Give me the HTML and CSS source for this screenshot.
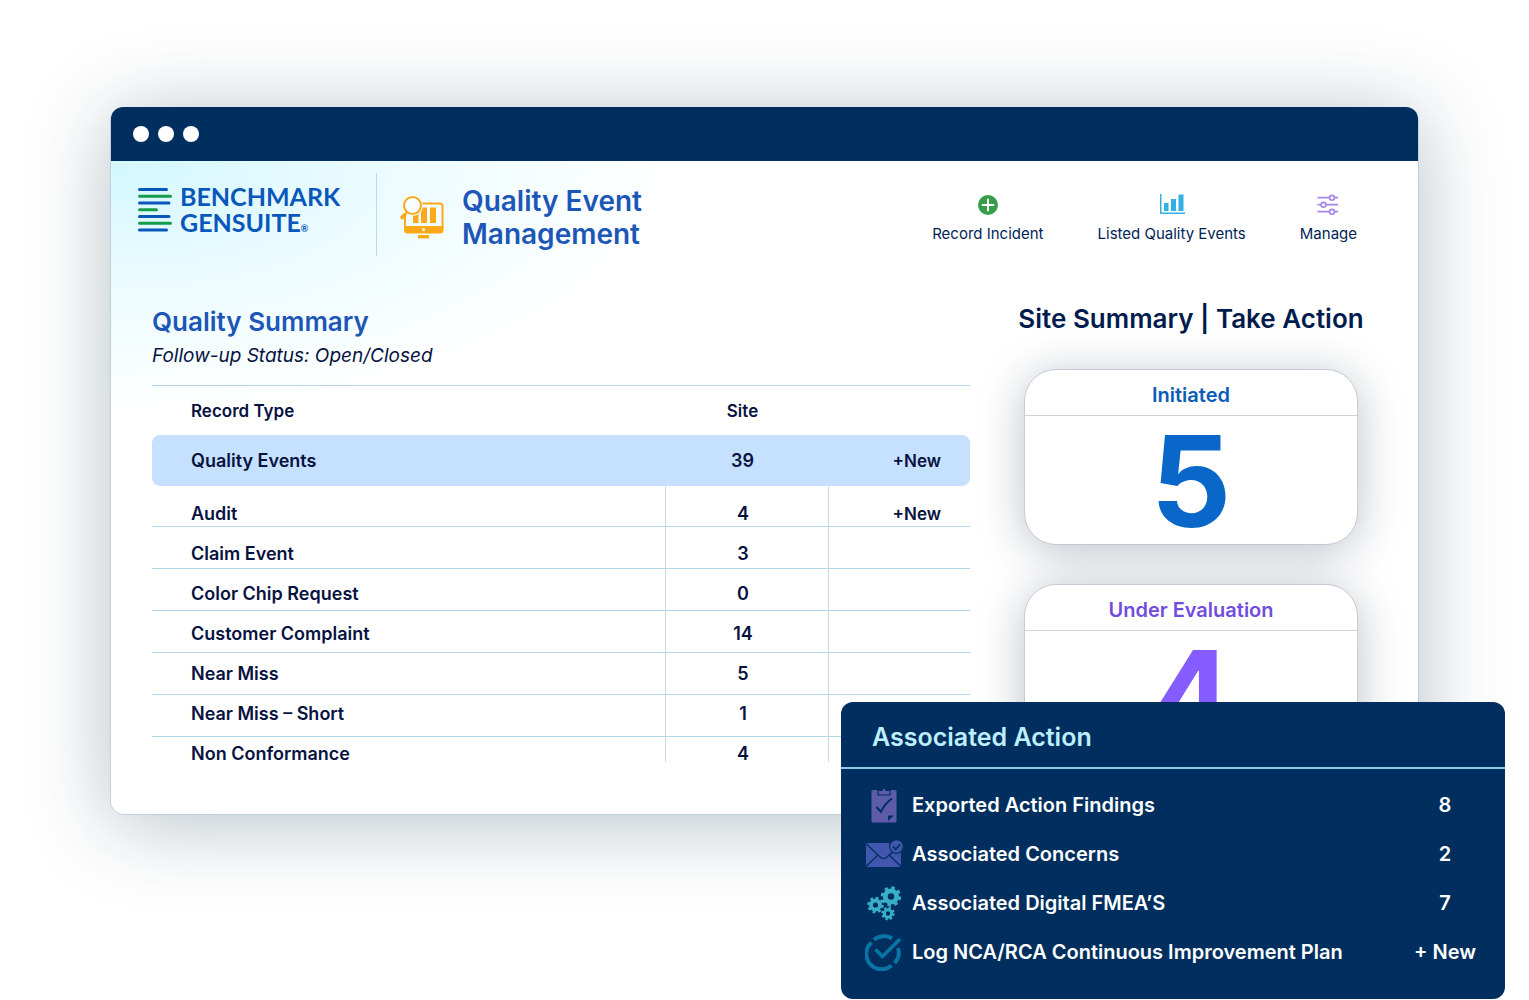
FILE: index.html
```html
<!DOCTYPE html>
<html lang="en">
<head>
<meta charset="utf-8">
<meta name="viewport" content="width=device-width, initial-scale=1">
<title>Quality Event Management</title>
<link rel="stylesheet" href="styles.css">
</head>
<body>
<main class="stage">
  <div class="window">
    <div class="titlebar"><span class="dot"></span><span class="dot"></span><span class="dot"></span></div>
    <header class="header">
      <a class="brand" href="#" aria-label="Benchmark Gensuite">
        <svg class="brand-mark" viewBox="0 0 34 46" fill="none" stroke-width="3" stroke-linecap="round">
          <path stroke="#0a57bb" d="M1.5 2.5h27M1.5 16h29.500M1.5 29.500h29.500M1.5 43h27"/>
          <path stroke="#159b4b" d="M1.500 9.200h31M1.500 22.700h17M1.500 36.200h31"/>
        </svg>
        <span class="brand-name">BENCHMARK<br>GENSUITE<small>®</small></span>
      </a>
      <div class="product">
        <svg class="product-icon" viewBox="0 0 44 44">
          <path fill="none" stroke="#fba919" stroke-width="2" d="M22 8.500h17.500a3 3 0 0 1 3 3v21M5 21v12"/>
          <path fill="#fba919" d="M4 31h39.500v4a3.500 3.500 0 0 1-3.500 3.500H7.500A3.500 3.500 0 0 1 4 35zM18 40h11v3.500H18zM13 20.500l5.500-2v9.500H13zM21 12.500h6V28h-6zM30 12.500h6V28h-6z"/>
          <circle cx="23.500" cy="34.500" r="1.500" fill="#fff"/>
          <circle cx="12.500" cy="10.500" r="10.500" fill="#f2fdff"/>
          <circle cx="12.500" cy="10.500" r="8.500" fill="#f7feff" stroke="#fba919" stroke-width="2"/>
          <path stroke="#fba919" stroke-width="2" d="M7 17l-2.500 3"/>
          <path stroke="#fba919" stroke-width="4" stroke-linecap="round" d="M4.300 20.300l-2 2"/>
        </svg>
        <h1 class="product-title">Quality Event<br>Management</h1>
      </div>
      <nav class="nav">
        <a class="nav-link" href="#">
          <svg viewBox="0 0 26 22"><circle cx="13" cy="11" r="10" fill="#369e49"/><path stroke="#fff" stroke-width="2" stroke-linecap="round" d="M13 5.500v11M7.500 11h11"/></svg>
          Record Incident
        </a>
        <a class="nav-link" href="#">
          <svg viewBox="0 0 26 22" fill="#32b0e5"><path d="M1 0h1.500v18.500H26V20H1zM5 9h4.500v8H5zM12 5h5v12h-5zM19.500 0.500h5V17h-5z"/></svg>
          Listed Quality Events
        </a>
        <a class="nav-link" href="#">
          <svg viewBox="0 0 26 22" fill="none" stroke="#a788ea" stroke-width="1.700"><path d="M2.500 3.700h12M19.500 3.700h3.500M2.500 10.700h3.500M11 10.700h12M2.500 17.700h12M19.500 17.700h3.500"/><circle cx="17" cy="3.700" r="2.400"/><circle cx="8.500" cy="10.700" r="2.400"/><circle cx="17" cy="17.700" r="2.400"/></svg>
          Manage
        </a>
      </nav>
    </header>
    <div class="content">
      <section class="summary">
        <h2 class="summary-title">Quality Summary</h2>
        <p class="summary-status">Follow-up Status: Open/Closed</p>
        <table class="records">
          <colgroup><col><col class="col-site"><col class="col-new"></colgroup>
          <thead><tr><th scope="col">Record Type</th><th scope="col">Site</th><th></th></tr></thead>
          <tbody class="selected"><tr><td>Quality Events</td><td>39</td><td><button type="button" class="new">+New</button></td></tr></tbody>
          <tbody class="ruled">
            <tr><td>Audit</td><td>4</td><td><button type="button" class="new">+New</button></td></tr>
            <tr><td>Claim Event</td><td>3</td><td></td></tr>
            <tr><td>Color Chip Request</td><td>0</td><td></td></tr>
            <tr><td>Customer Complaint</td><td>14</td><td></td></tr>
            <tr><td>Near Miss</td><td>5</td><td></td></tr>
            <tr><td>Near Miss – Short</td><td>1</td><td></td></tr>
            <tr><td>Non Conformance</td><td>4</td><td></td></tr>
          </tbody>
        </table>
      </section>
      <section class="site">
        <h2 class="site-title">Site Summary | Take Action</h2>
        <article class="card initiated"><h3 class="card-title">Initiated</h3><p class="card-count">5</p></article>
        <article class="card evaluation"><h3 class="card-title">Under Evaluation</h3><p class="card-count">4</p></article>
      </section>
    </div>
  </div>
  <aside class="panel">
    <h2 class="panel-title">Associated Action</h2>
    <ul class="actions">
      <li class="action">
        <svg viewBox="0 0 38 38"><path fill="#5d5caa" d="M8 4h22a1.500 1.500 0 0 1 1.500 1.500V35a1.500 1.500 0 0 1-1.500 1.500H8A1.500 1.500 0 0 1 6.500 35V5.500A1.500 1.500 0 0 1 8 4z"/><path fill="#5d5caa" stroke="#002f5f" stroke-width="1.200" d="M13 4.500h4a2 2 0 0 1 4 0h4V9H13z"/><path fill="none" stroke="#002f5f" stroke-width="2" d="M11.500 21l4.500 5c2-5 6-10 11-13.500"/><path fill="#002f5f" d="M23 29.500h6l-6 5.500z"/></svg>
        <span class="action-name">Exported Action Findings</span><span class="action-value">8</span>
      </li>
      <li class="action">
        <svg viewBox="0 0 38 38"><path fill="#4156ae" d="M2 8h34v22a2 2 0 0 1-2 2H3a2 2 0 0 1-2-2V9z"/><path fill="none" stroke="#002f5f" stroke-width="1.300" d="M1.500 9l13 12.500c3 3 5 3 8 0L35 11M1.500 31L13 20M35.500 31L24 20"/><circle cx="31.500" cy="11.500" r="7.500" fill="#002f5f"/><circle cx="31.500" cy="11.500" r="6.300" fill="#4156ae"/><path fill="none" stroke="#002f5f" stroke-width="1.700" d="M28 11.500l2.700 2.700 4.500-5"/></svg>
        <span class="action-name">Associated Concerns</span><span class="action-value">2</span>
      </li>
      <li class="action">
        <svg viewBox="0 0 38 38" fill="none" stroke="#38afc9">
          <circle cx="26" cy="12.500" r="5.700" stroke-width="4.800"/><circle cx="26" cy="12.500" r="8.700" stroke-width="3" stroke-dasharray="3.416"/>
          <circle cx="10.500" cy="21" r="4.500" stroke-width="3.800"/><circle cx="10.500" cy="21" r="7" stroke-width="2.600" stroke-dasharray="2.749"/>
          <circle cx="23" cy="29.500" r="3.700" stroke-width="3"/><circle cx="23" cy="29.500" r="5.700" stroke-width="2.200" stroke-dasharray="2.238"/>
        </svg>
        <span class="action-name">Associated Digital FMEA’S</span><span class="action-value">7</span>
      </li>
      <li class="action">
        <svg viewBox="0 0 38 38" fill="none" stroke="#0875a5"><path stroke-width="4" d="M6.500 9.500a15 15 0 0 0 20 23M9 6.800a15 15 0 0 1 18-1.300M33 15a15 15 0 0 1-3.500 15"/><path stroke-width="3.600" d="M10.500 16.500l7 7L35 6"/></svg>
        <span class="action-name">Log NCA/RCA Continuous Improvement Plan</span><button type="button" class="action-value">+ New</button>
      </li>
    </ul>
  </aside>
</main>
</body>
</html>
```
FILE: styles.css
```css
* { box-sizing: border-box; }
body { margin: 0; background: #fff; color: #07123f; font-family: Inter, "Open Sans", sans-serif; }
h1, h2, h3, p, ul { margin: 0; padding: 0; }
button { border: 0; padding: 0; background: none; font: inherit; color: inherit; cursor: pointer; }
a { color: inherit; text-decoration: none; }

.stage { display: flex; flex-direction: column; padding: 107px 24px 0 110px; overflow: hidden; }

.window {
  margin-right: 86px;
  border: 1px solid #c3d0dc;
  border-top: 0;
  border-radius: 14px;
  background: radial-gradient(ellipse 560px 250px at 0 54px, #d3f7ff, #e9fbff 45%, #fff);
  box-shadow: 0 8px 84px rgba(10, 45, 70, .3);
}
.titlebar { display: flex; align-items: center; gap: 9px; height: 54px; padding-left: 22px; border-radius: 12px 12px 0 0; background: #002f5f; }
.dot { width: 16px; height: 16px; border-radius: 50%; background: #fff; }

.header { display: flex; align-items: flex-start; padding: 12px 61px 0 27px; }
.brand { display: flex; gap: 8px; width: 239px; height: 83px; padding-top: 14px; border-right: 1px solid #b9dcf0; color: #0a57bb; }
.brand-mark { width: 34px; height: 46px; }
.brand-name { font: 700 25px/26px Lato, sans-serif; margin-top: -4px; }
.brand-name small { font-size: 9px; line-height: 9px; }
.product { display: flex; gap: 18px; padding: 12px 0 0 23px; color: #1c57b7; }
.product-icon { width: 44px; height: 44px; margin-top: 10px; }
.product-title { font-size: 28px; line-height: 33px; font-weight: 600; }
.nav { display: flex; gap: 54px; margin-left: auto; padding-top: 21px; }
.nav-link { display: flex; flex-direction: column; align-items: center; gap: 8px; font-size: 15px; line-height: 20px; white-space: nowrap; color: #001f55; }
.nav-link svg { width: 26px; height: 22px; }

.content { display: grid; grid-template-columns: minmax(0, 1fr) 348px; gap: 47px; padding: 48px 53px 52px 41px; }
.summary-title { font-size: 26px; line-height: 36px; font-weight: 600; color: #1c57b7; }
.summary-status { font-size: 19px; line-height: 32px; font-style: italic; }
.records { width: 100%; margin-top: 13px; border-collapse: separate; border-spacing: 0; table-layout: fixed; font-size: 18px; line-height: 16px; font-weight: 600; }
.col-site { width: 163px; }
.col-new { width: 142px; }
.records th, .records td { padding: 12px 8px 12px 0; font-weight: 600; text-align: center; }
.records th:first-child, .records td:first-child { padding-left: 39px; text-align: left; }
.records td:last-child { padding-right: 29px; text-align: right; }
.records th { height: 50px; border-top: 1px solid #b4d4ea; font-size: 17px; }
.selected td { height: 51px; background: #c6e1ff; }
.selected td:first-child { border-radius: 8px 0 0 8px; }
.selected td:last-child { border-radius: 0 8px 8px 0; }
.ruled { background: repeating-linear-gradient(transparent 0 40px, #b4d4ea 40px 41px, transparent 41px 42px); }
.ruled td + td { border-left: 1px solid #ccd9e2; }
.ruled tr:first-child td { padding-top: 20px; }
.ruled tr:last-child td { padding-bottom: 0; }
.new { display: block; margin-left: auto; font-size: 17px; }

.site { display: flex; flex-direction: column; align-items: center; }
.site-title { font-size: 26px; line-height: 30px; font-weight: 600; white-space: nowrap; color: #001b4d; }
.card { width: 334px; height: 176px; border: 1px solid #c5cbd4; border-radius: 32px; background: #fff; box-shadow: 0 6px 46px rgba(10, 35, 60, .28); text-align: center; }
.site-title + .card { margin-top: 35px; }
.card + .card { position: relative; margin-top: 39px; }
.card-title { padding: 12px 0 7px; border-bottom: 1px solid #ced4da; font-size: 20px; line-height: 26px; font-weight: 600; }
.card-count { font-size: 126px; line-height: 130px; font-weight: 700; }
.initiated { color: #0867c8; }
.initiated .card-title { color: #0a5cb8; }
.evaluation { color: #855cff; }
.evaluation .card-title { color: #724cdf; }

.panel { position: relative; align-self: flex-end; width: 664px; max-width: 100%; margin-top: -113px; border-radius: 12px; background: #002f5f; color: #fff; }
.panel-title { padding: 20px 31px 15px; border-bottom: 2px solid #8bc9e6; font-size: 25px; line-height: 30px; font-weight: 600; color: #bdefff; }
.actions { padding: 11px 24px 23px; list-style: none; }
.action { display: grid; grid-template-columns: 38px minmax(0, 1fr) 72px; align-items: center; column-gap: 9px; height: 49px; font-size: 20px; line-height: 24px; font-weight: 600; }
.action svg { width: 38px; height: 38px; }
.action-value { text-align: center; }
```
